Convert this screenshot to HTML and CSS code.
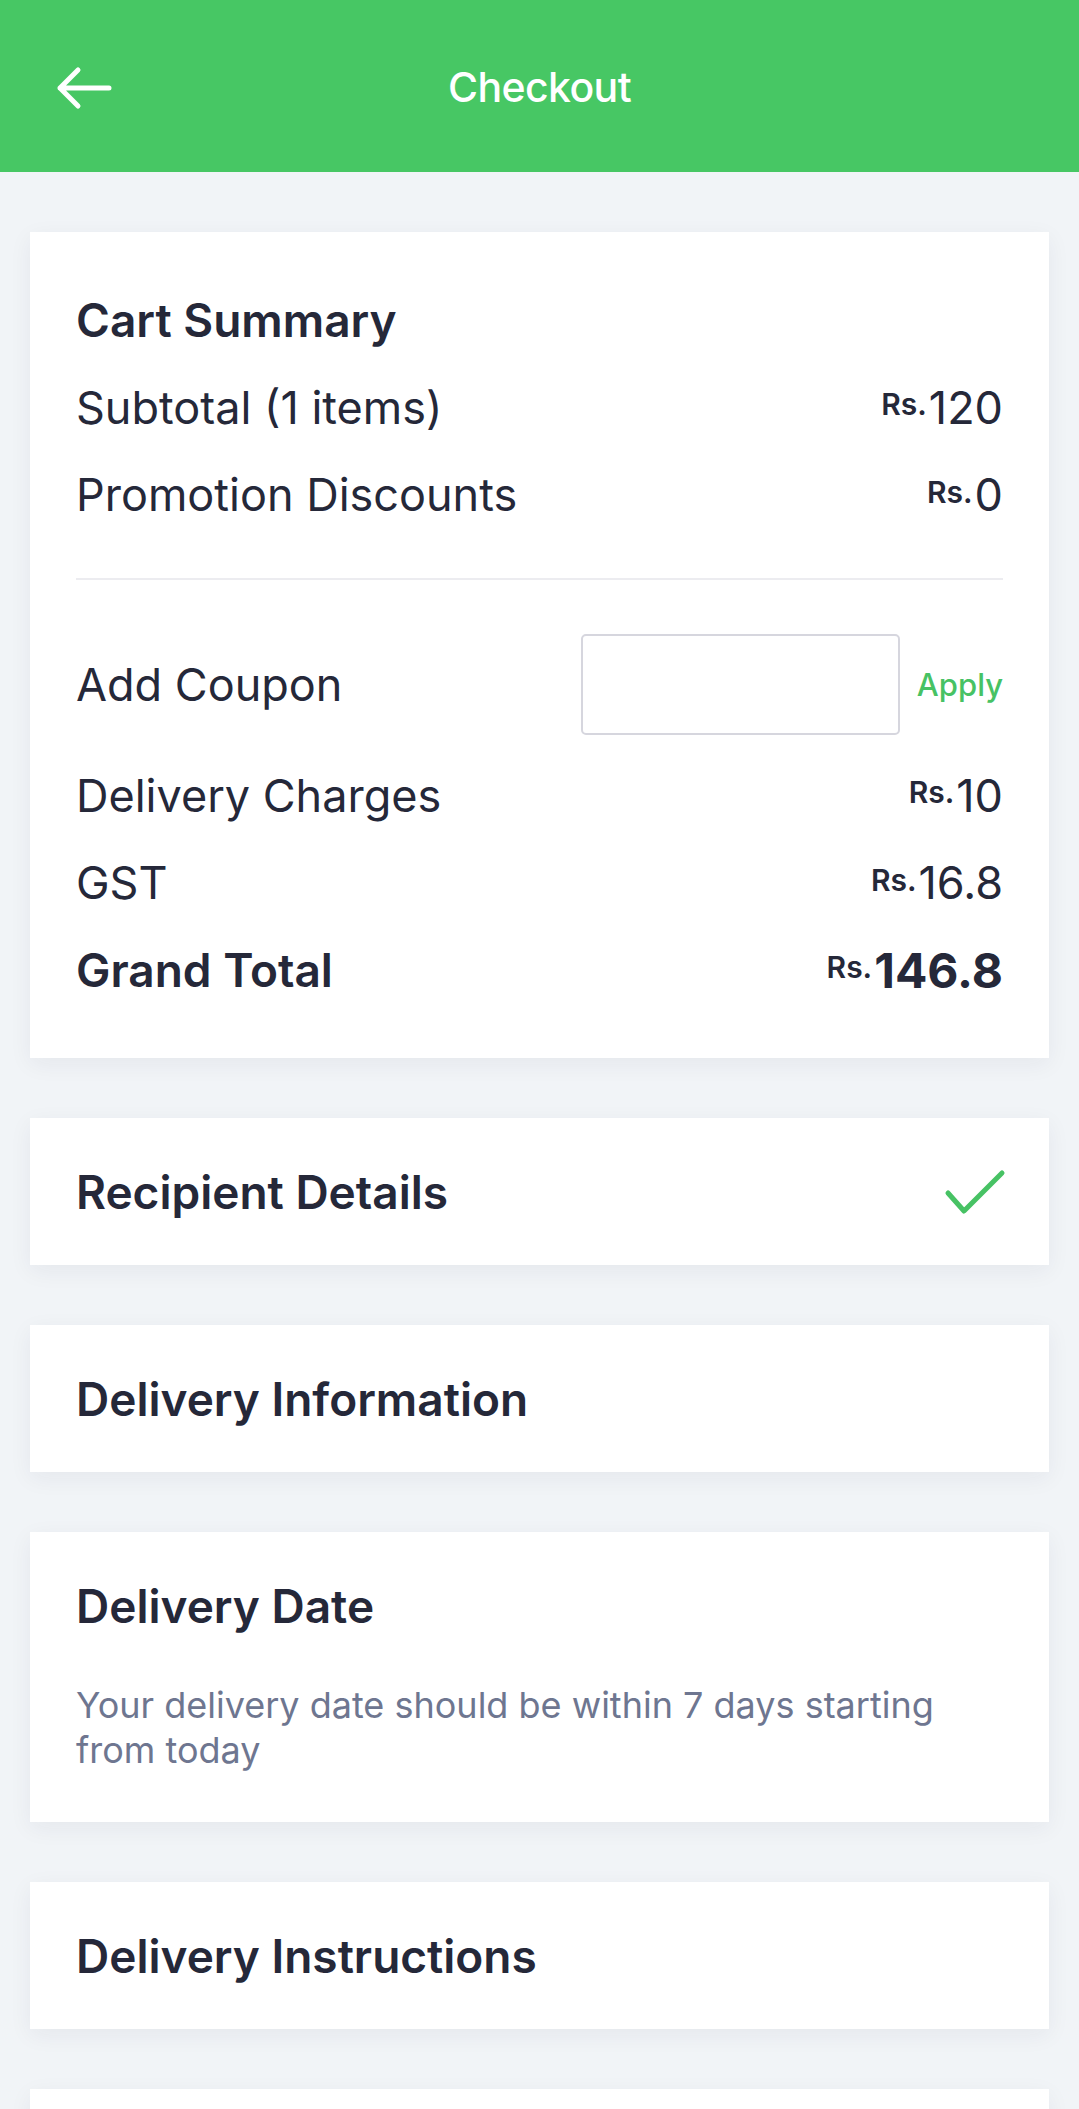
FILE: index.html
```html
<!DOCTYPE html>
<html lang="en">
<head>
<meta charset="utf-8">
<title>Checkout</title>
<link rel="stylesheet" href="styles.css">
</head>
<body>
<header class="topbar">
  <button class="back" aria-label="Back">
    <svg width="60" height="44" viewBox="0 0 60 44"><path d="M56 22 H7 M25 4 L7 22 L25 40" fill="none" stroke="#fff" stroke-width="5" stroke-linecap="round" stroke-linejoin="round"/></svg>
  </button>
  <h1 class="title">Checkout</h1>
</header>
<main class="content">
  <section class="card summary">
    <h2 class="heading row">Cart Summary</h2>
    <div class="row"><span>Subtotal (1 items)</span><span class="price"><span class="cur">Rs.</span>120</span></div>
    <div class="row"><span>Promotion Discounts</span><span class="price"><span class="cur">Rs.</span>0</span></div>
    <hr class="divider">
    <div class="coupon-row">
      <span>Add Coupon</span>
      <div class="coupon-actions">
        <input class="coupon-input" type="text" aria-label="Coupon code">
        <span class="apply">Apply</span>
      </div>
    </div>
    <div class="row"><span>Delivery Charges</span><span class="price"><span class="cur">Rs.</span>10</span></div>
    <div class="row"><span>GST</span><span class="price"><span class="cur">Rs.</span>16.8</span></div>
    <div class="row total"><span>Grand Total</span><span class="price"><span class="cur">Rs.</span>146.8</span></div>
  </section>

  <section class="card section-card">
    <h2 class="heading">Recipient Details</h2>
    <svg class="check" width="62" height="46" viewBox="0 0 62 46"><path d="M4 24 L20 42 L58 4" fill="none" stroke="#47C264" stroke-width="5" stroke-linecap="round" stroke-linejoin="round"/></svg>
  </section>

  <section class="card section-card">
    <h2 class="heading">Delivery Information</h2>
  </section>

  <section class="card date-card">
    <h2 class="heading">Delivery Date</h2>
    <p class="note">Your delivery date should be within 7 days starting from today</p>
  </section>

  <section class="card section-card">
    <h2 class="heading">Delivery Instructions</h2>
  </section>

  <section class="card section-card"></section>
</main>
</body>
</html>
```

FILE: styles.css
```css
* { box-sizing: border-box; }

html, body {
  margin: 0;
  padding: 0;
}

body {
  background: #F1F4F7;
  font-family: Inter, "Noto Sans", "Liberation Sans", sans-serif;
  color: #252839;
}

.topbar {
  height: 172px;
  background: #47C764;
  display: flex;
  align-items: center;
  justify-content: center;
  position: relative;
}

.back {
  position: absolute;
  left: 53px;
  top: 66px;
  padding: 0;
  margin: 0;
  border: 0;
  background: none;
  display: flex;
}

.title {
  margin: 0;
  color: #fff;
  font-size: 41px;
  font-weight: 500;
  letter-spacing: -0.6px;
  padding-top: 2px;
}

.content {
  padding: 60px 30px;
  display: flex;
  flex-direction: column;
  gap: 60px;
}

.card {
  background: #fff;
  box-shadow: 0 6px 22px rgba(30, 40, 70, 0.06);
  padding: 0 46px;
}

.heading {
  margin: 0;
  font-size: 46px;
  font-weight: 600;
  letter-spacing: 0;
  color: #252839;
}

.summary {
  padding-top: 44px;
  padding-bottom: 44px;
}

.row {
  height: 87.5px;
  display: flex;
  align-items: center;
  justify-content: space-between;
  font-size: 45px;
}

.heading.row {
  font-size: 46px;
}

.price {
  display: flex;
  align-items: center;
}

.cur {
  font-size: 30px;
  font-weight: 600;
  margin-right: 2px;
  margin-top: -6px;
}

.total {
  font-weight: 600;
  font-size: 46px;
}

.total .price {
  font-size: 48px;
  font-weight: 700;
}

.divider {
  border: 0;
  height: 2px;
  background: #ECECF0;
  margin: 39px 0 54px;
}

.coupon-row {
  display: flex;
  align-items: center;
  justify-content: space-between;
  font-size: 45px;
  margin-bottom: 17px;
}

.coupon-actions {
  display: flex;
  align-items: center;
  gap: 17px;
}

.coupon-input {
  width: 319px;
  height: 101px;
  border: 2.5px solid #D6D6DE;
  border-radius: 5px;
  background: #fff;
  margin: 0;
  padding: 0 12px;
  font: inherit;
}

.apply {
  color: #47C264;
  font-size: 31px;
  font-weight: 500;
}

.section-card {
  height: 147px;
  display: flex;
  align-items: center;
  justify-content: space-between;
}

.check {
  margin-right: -3px;
}

.date-card {
  padding-top: 44px;
  padding-bottom: 49px;
}

.date-card .heading {
  line-height: 60px;
}

.note {
  margin: 47px 0 0;
  font-size: 36px;
  line-height: 45px;
  color: #6E7690;
}
```
